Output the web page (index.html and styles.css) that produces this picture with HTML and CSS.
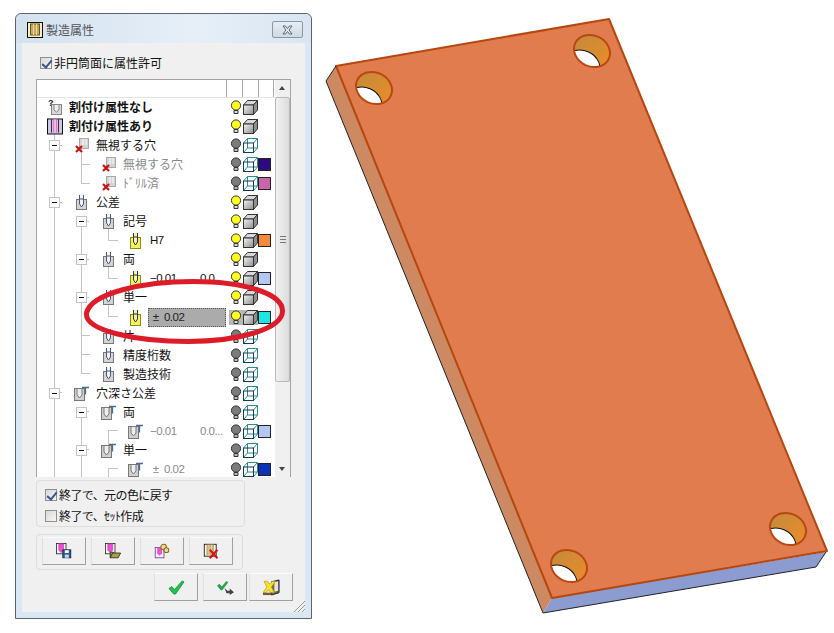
FILE: index.html
```html
<!DOCTYPE html>
<html lang="ja">
<head>
  <meta charset="UTF-8">
  <title>製造属性</title>
  <link rel="stylesheet" href="styles.css">
</head>
<body>

  <!-- shared icons -->
  <svg class="defs" width="0" height="0">
    <defs>
      <linearGradient id="cubeFace" x1="0" y1="0" x2="1" y2="1">
        <stop offset="0" stop-color="#f4f4f4"/>
        <stop offset="1" stop-color="#8c8c8c"/>
      </linearGradient>
      <linearGradient id="holeWall" x1="0" y1="0" x2="1" y2="0.4">
        <stop offset="0" stop-color="#c48a3c"/>
        <stop offset="1" stop-color="#e48c2c"/>
      </linearGradient>
      <symbol id="bulbOn" viewBox="0 0 12 15">
        <circle cx="6" cy="5.5" r="4.6" fill="#ffff1e" stroke="#333"/>
        <path d="M4 10.5h4v3h-4z" fill="#ddd" stroke="#333"/>
      </symbol>
      <symbol id="bulbOff" viewBox="0 0 12 15">
        <circle cx="6" cy="5.5" r="4.6" fill="#7c7c7c" stroke="#333"/>
        <path d="M4 10.5h4v3h-4z" fill="#bbb" stroke="#333"/>
      </symbol>
      <symbol id="cubeSolid" viewBox="0 0 15 15">
        <path d="M.5 5 4.500.5h10L10.500 5z" fill="#d8d8d8" stroke="#333"/>
        <path d="M10.500 5 14.500.5v9.500l-4 4.500z" fill="#8f8f8f" stroke="#333"/>
        <rect x=".5" y="5" width="10" height="9.5" fill="url(#cubeFace)" stroke="#333"/>
      </symbol>
      <symbol id="cubeWire" viewBox="0 0 15 15">
        <path d="M4.500.5h10V10h-10zM4.500 10 .5 14.500M14.500 10l-4 4.500M14.500.5l-4 4.500M4.500.5.5 5" fill="none" stroke="#2a8a94"/>
        <rect x=".5" y="5" width="10" height="9.5" fill="none" stroke="#123c58"/>
      </symbol>
      <symbol id="pin" viewBox="0 0 14 17">
        <rect x="1.500" y="5.500" width="10" height="10" fill="#d4d4d4" stroke="#777"/>
        <path d="M4.500 1v9l2 3 2-3V1" fill="#f2f2f2" stroke="#4a5a78"/>
        <path d="M4.500 5h4" stroke="#4a5a78"/>
      </symbol>
      <symbol id="pinYellow" viewBox="0 0 14 17">
        <rect x="1.500" y="5.500" width="10" height="11" fill="#f2f25a" stroke="#8a8a20"/>
        <path d="M4.500 1v9l2 3 2-3V1" fill="#f6f6a0" stroke="#334"/>
        <path d="M4.500 5h4" stroke="#334"/>
      </symbol>
      <symbol id="pinMissing" viewBox="0 0 14 17">
        <rect x="3.500" y="5.500" width="10" height="10" fill="#d8d8d8" stroke="#888"/>
        <path d="M6 6v5l2.500 2 2.500-2V6" fill="#eee" stroke="#888"/>
        <text x="0" y="7" class="ico-mark">?</text>
      </symbol>
      <symbol id="stripes" viewBox="0 0 16 16">
        <rect x=".5" y=".5" width="15" height="15" fill="#c9c6ee" stroke="#111"/>
        <path d="M4.500 1v13M11.500 1v13" stroke="#333"/>
        <rect x="6" y="1" width="4" height="13" fill="#f070c0"/>
        <path d="M8 1v13" stroke="#fff"/>
      </symbol>
      <symbol id="pinCross" viewBox="0 0 14 17">
        <rect x="4.500" y="1.500" width="9" height="10" fill="#d4d4d4" stroke="#aaa"/>
        <path d="M8 2v6M11 2v6" stroke="#fff"/>
        <path d="M1 9l6 6M7 9l-6 6" stroke="#c81414" stroke-width="2.2"/>
      </symbol>
      <symbol id="depth" viewBox="0 0 16 17">
        <rect x=".5" y="3.500" width="10" height="12" fill="#cfcfcf" stroke="#777"/>
        <path d="M3 4v6l2.500 3L8 10V4" fill="#eee" stroke="#777"/>
        <path d="M8 2.500h7M11.500 2.500v7" stroke="#4a6a98" stroke-width="1.300"/>
      </symbol>
      <symbol id="pinkDoc" viewBox="0 0 20 20">
        <rect x=".5" y=".5" width="12" height="13" fill="#f6f6f6" stroke="#222"/>
        <path d="M3.500 1h6v8l-3 3-3-3z" fill="#f050d0" stroke="#a020a0" stroke-width=".6"/>
      </symbol>
      <clipPath id="holeClip">
        <ellipse rx="18.500" ry="15.500" transform="rotate(25)"/>
      </clipPath>
      <g id="hole">
        <ellipse rx="18.500" ry="15.500" transform="rotate(25)" fill="url(#holeWall)"/>
        <g clip-path="url(#holeClip)">
          <ellipse cx="-10" cy="15" rx="18.500" ry="15.500" transform="rotate(25 -10 15)" fill="#fff" stroke="#111"/>
        </g>
        <ellipse rx="18.500" ry="15.500" transform="rotate(25)" fill="none" stroke="#b8480f" stroke-width="2"/>
      </g>
    </defs>
  </svg>

  <div class="window">
    <div class="titlebar">
      <svg class="title-icon" width="16" height="16" viewBox="0 0 16 16">
        <rect x=".5" y=".5" width="15" height="15" fill="#f4efc8" stroke="#111"/>
        <rect x="3.500" y="2" width="9" height="11" fill="#c8a860" stroke="#6a5420"/>
        <path d="M6.500 2v11M9.500 2v11" stroke="#eddca0"/>
      </svg>
      <span class="title-text">製造属性</span>
      <button class="close-btn">
        <svg width="13" height="10" viewBox="0 0 13 10">
          <path d="M2 1h2.500l2 2.500L8.500 1H11L8 5l3 4H8.500l-2-2.500L4.500 9H2l3-4z" fill="#e8eef4" stroke="#5a6570"/>
        </svg>
      </button>
    </div>

    <div class="panel">
      <label class="check top-check"><span class="box on"></span>非円筒面に属性許可</label>

      <div class="tree">
        <div class="tree-head">
          <span class="head-main"></span><span class="head-col"></span><span class="head-col"></span><span class="head-col"></span>
        </div>
        <div class="tree-main">
          <div class="tree-body">
            <svg class="guides" width="238" height="380">
              <path d="M54.500 36V380M81.500 46V85M81.500 123V275M81.500 314V380M108.500 123V142M108.500 161V180M108.500 199V218M108.500 332V351M108.500 370V380" fill="none" stroke="#c4c4c4"/>
              <path d="M54 47h8M54 104h8M54 294h8M81 66h9M81 85h9M81 123h8M81 161h8M81 199h8M81 237h9M81 256h9M81 275h9M81 313h8M81 351h8M108 142h10M108 180h10M108 218h10M108 332h10M108 370h10" fill="none" stroke="#c4c4c4" transform="translate(0 .5)"/>
            </svg>

            <div class="row lv0"><svg class="ico"><use href="#pinMissing"/></svg><span class="label strong">割付け属性なし</span><span class="state"><svg class="bulb"><use href="#bulbOn"/></svg><svg class="cube"><use href="#cubeSolid"/></svg></span></div>
            <div class="row lv0"><svg class="ico"><use href="#stripes"/></svg><span class="label strong">割付け属性あり</span><span class="state"><svg class="bulb"><use href="#bulbOn"/></svg><svg class="cube"><use href="#cubeSolid"/></svg></span></div>
            <div class="row lv1"><span class="exp"></span><svg class="ico"><use href="#pinCross"/></svg><span class="label">無視する穴</span><span class="state"><svg class="bulb"><use href="#bulbOff"/></svg><svg class="cube"><use href="#cubeWire"/></svg></span></div>
            <div class="row lv2"><svg class="ico"><use href="#pinCross"/></svg><span class="label dim">無視する穴</span><span class="state"><svg class="bulb"><use href="#bulbOff"/></svg><svg class="cube"><use href="#cubeWire"/></svg><span class="swatch navy"></span></span></div>
            <div class="row lv2"><svg class="ico"><use href="#pinCross"/></svg><span class="label dim">ﾄﾞﾘﾙ済</span><span class="state"><svg class="bulb"><use href="#bulbOff"/></svg><svg class="cube"><use href="#cubeWire"/></svg><span class="swatch mauve"></span></span></div>
            <div class="row lv1"><span class="exp"></span><svg class="ico"><use href="#pin"/></svg><span class="label">公差</span><span class="state"><svg class="bulb"><use href="#bulbOn"/></svg><svg class="cube"><use href="#cubeSolid"/></svg></span></div>
            <div class="row lv2"><span class="exp"></span><svg class="ico"><use href="#pin"/></svg><span class="label">記号</span><span class="state"><svg class="bulb"><use href="#bulbOn"/></svg><svg class="cube"><use href="#cubeSolid"/></svg></span></div>
            <div class="row lv3"><svg class="ico"><use href="#pinYellow"/></svg><span class="label num">H7</span><span class="state"><svg class="bulb"><use href="#bulbOn"/></svg><svg class="cube"><use href="#cubeSolid"/></svg><span class="swatch orange"></span></span></div>
            <div class="row lv2"><span class="exp"></span><svg class="ico"><use href="#pin"/></svg><span class="label">両</span><span class="state"><svg class="bulb"><use href="#bulbOn"/></svg><svg class="cube"><use href="#cubeSolid"/></svg></span></div>
            <div class="row lv3"><svg class="ico"><use href="#pinYellow"/></svg><span class="label num"><span class="val">−0.01</span>0.0</span><span class="state"><svg class="bulb"><use href="#bulbOn"/></svg><svg class="cube"><use href="#cubeSolid"/></svg><span class="swatch sky"></span></span></div>
            <div class="row lv2"><span class="exp"></span><svg class="ico"><use href="#pin"/></svg><span class="label">単一</span><span class="state"><svg class="bulb"><use href="#bulbOn"/></svg><svg class="cube"><use href="#cubeSolid"/></svg></span></div>
            <div class="row lv3 sel"><svg class="ico"><use href="#pinYellow"/></svg><span class="label num"> ±  0.02</span><span class="state"><svg class="bulb"><use href="#bulbOn"/></svg><svg class="cube"><use href="#cubeSolid"/></svg><span class="swatch cyan"></span></span></div>
            <div class="row lv2"><svg class="ico"><use href="#pin"/></svg><span class="label">片</span><span class="state"><svg class="bulb"><use href="#bulbOff"/></svg><svg class="cube"><use href="#cubeWire"/></svg></span></div>
            <div class="row lv2"><svg class="ico"><use href="#pin"/></svg><span class="label">精度桁数</span><span class="state"><svg class="bulb"><use href="#bulbOff"/></svg><svg class="cube"><use href="#cubeWire"/></svg></span></div>
            <div class="row lv2"><svg class="ico"><use href="#pin"/></svg><span class="label">製造技術</span><span class="state"><svg class="bulb"><use href="#bulbOff"/></svg><svg class="cube"><use href="#cubeWire"/></svg></span></div>
            <div class="row lv1"><span class="exp"></span><svg class="ico"><use href="#depth"/></svg><span class="label">穴深さ公差</span><span class="state"><svg class="bulb"><use href="#bulbOff"/></svg><svg class="cube"><use href="#cubeWire"/></svg></span></div>
            <div class="row lv2"><span class="exp"></span><svg class="ico"><use href="#depth"/></svg><span class="label">両</span><span class="state"><svg class="bulb"><use href="#bulbOff"/></svg><svg class="cube"><use href="#cubeWire"/></svg></span></div>
            <div class="row lv3"><svg class="ico"><use href="#depth"/></svg><span class="label num dim"><span class="val">−0.01</span>0.0...</span><span class="state"><svg class="bulb"><use href="#bulbOff"/></svg><svg class="cube"><use href="#cubeWire"/></svg><span class="swatch sky"></span></span></div>
            <div class="row lv2"><span class="exp"></span><svg class="ico"><use href="#depth"/></svg><span class="label">単一</span><span class="state"><svg class="bulb"><use href="#bulbOff"/></svg><svg class="cube"><use href="#cubeWire"/></svg></span></div>
            <div class="row lv3"><svg class="ico"><use href="#depth"/></svg><span class="label num dim"> ±  0.02</span><span class="state"><svg class="bulb"><use href="#bulbOff"/></svg><svg class="cube"><use href="#cubeWire"/></svg><span class="swatch blue"></span></span></div>
          </div>

          <div class="scrollbar">
            <span class="arrow up"></span>
            <div class="thumb"><span class="grip"></span></div>
            <span class="arrow down"></span>
          </div>
        </div>
      </div>

      <div class="group group-checks">
        <label class="check tight"><span class="box on"></span>終了で、元の色に戻す</label>
        <label class="check tight"><span class="box"></span>終了で、ｾｯﾄ作成</label>
      </div>

      <div class="group group-tools">
        <button class="btn">
          <svg width="16" height="16" viewBox="0 0 20 20"><use href="#pinkDoc" width="20" height="20"/><rect x="8.500" y="8.500" width="10" height="10" fill="#2a5a98" stroke="#102040"/><rect x="11" y="9" width="5" height="3.500" fill="#fff"/><rect x="11" y="14.500" width="5" height="4" fill="#c8d4e4"/></svg>
        </button>
        <button class="btn">
          <svg width="16" height="16" viewBox="0 0 20 20"><use href="#pinkDoc" width="20" height="20"/><path d="M6.500 18.500l3-6h10l-3 6zM6.500 18.500v-7h4l1 1" fill="#a8a040" stroke="#222"/></svg>
        </button>
        <button class="btn">
          <svg width="16" height="16" viewBox="0 0 20 20"><rect x="1.500" y="5.500" width="11" height="13" fill="#f6f6f6" stroke="#7a2a9a"/><path d="M4 6h6v7l-3 3-3-3z" fill="#f050d0"/><circle cx="12" cy="5" r="3.500" fill="#e8d8a0" stroke="#8a6a10" stroke-width="1.300"/><circle cx="15.500" cy="9" r="3" fill="#e8d8a0" stroke="#8a6a10" stroke-width="1.300"/></svg>
        </button>
        <button class="btn">
          <svg width="17" height="17" viewBox="0 0 20 20"><rect x="1.500" y="1.500" width="14" height="14" fill="#f6f6f6" stroke="#111"/><rect x="4" y="2" width="9" height="13" fill="#c8b078"/><path d="M7 2v13M10 2v13" stroke="#ecdcae"/><path d="M8 8l9 10M17 8 8 18" stroke="#d01818" stroke-width="2.600"/></svg>
        </button>
      </div>

      <div class="actions">
        <button class="btn">
          <svg width="17" height="15" viewBox="0 0 18 16"><path d="M1 9l3-2 3 3 8-9 2 1-9 13h-2z" fill="#22c050" stroke="#128a38" stroke-width=".8"/></svg>
        </button>
        <button class="btn">
          <svg width="17" height="15" viewBox="0 0 18 16"><path d="M0 6l2.500-2 2.500 3 5-6 2 1.500-6.500 8.500h-1.500z" fill="#2aa050"/><path d="M8 8.500l3 3h2.500V9l4.500 4-4.500 3v-2H10z" fill="#444"/></svg>
        </button>
        <button class="btn">
          <svg width="17" height="17" viewBox="0 0 18 17"><path d="M9 2.500l8-2V14l-8 2.500z" fill="#6a6a48" stroke="#1a1a50"/><path d="M12 3l4-1v10l-4 1z" fill="#e8e8c8"/><path d="M1 2h4l2 3 3-3h3L9 8l3 6H8L6 11l-3 3H0l4-6z" fill="#f6e02c" stroke="#a89018" stroke-width=".6"/><path d="M0 14h9v2.500H0z" fill="#7a5a34"/></svg>
        </button>
      </div>

      <svg class="resize-grip" width="12" height="12" viewBox="0 0 12 12">
        <path d="M12 1 1 12M12 5l-7 7M12 9l-3 3" stroke="#9a9a9a"/>
      </svg>
    </div>

    <svg class="marker" width="210" height="72" viewBox="0 0 210 72">
      <path d="M3.500 36C8 16 60 4.500 110 4.500c50 0 89.500 11.500 89.500 29.500 0 18-44.500 30.500-94.500 30.500C55 64.500 1 54 3.500 36z" fill="none" stroke="#dc1c28" stroke-width="5"/>
    </svg>
  </div>

  <svg class="part" width="514" height="633" viewBox="320 0 514 633">
    <polygon points="336,66 326,81 543,613 552,598" fill="#cd8a62"/>
    <polygon points="552,598 543,613 816,567 826,552" fill="#8c9bd0"/>
    <polygon points="336,66 609,19 827,551 552,598" fill="#e07c4e" stroke="#b5470f" stroke-width="2" stroke-linejoin="round"/>
    <polyline points="336,66 326,81 543,613 816,567 826,552" fill="none" stroke="#222" stroke-width="1"/>
    <use href="#hole" x="374" y="88"/>
    <use href="#hole" x="592" y="51"/>
    <use href="#hole" x="569" y="566"/>
    <use href="#hole" x="788" y="529"/>
  </svg>

</body>
</html>
```
FILE: styles.css
```css
* {
  box-sizing: border-box;
}

html, body {
  margin: 0;
  height: 100%;
}

body {
  display: flex;
  align-items: flex-start;
  padding: 13px 0 0 15px;
  background: #fff;
  font-family: "Noto Sans CJK JP", "Liberation Sans", sans-serif;
  font-size: 12px;
  color: #111;
  overflow: hidden;
}

.defs {
  position: absolute;
}

.ico-mark {
  font-family: "Liberation Sans", sans-serif;
  font-size: 9px;
  font-weight: 700;
  fill: #222;
}

/* window */
.window {
  position: relative;
  flex: none;
  display: flex;
  flex-direction: column;
  width: 297px;
  height: 606px;
  border: 1px solid #59646e;
  border-radius: 6px 6px 0 0;
  background: #dbe7f3;
}

.titlebar {
  flex: none;
  display: flex;
  align-items: center;
  height: 29px;
  padding: 2px 8px 0 11px;
  background: linear-gradient(90deg, #d3e1ef, #e6eff8 60%, #d9e6f2);
  border-radius: 6px 6px 0 0;
}

.title-icon {
  flex: none;
}

.title-text {
  margin-left: 3px;
  color: #555;
  font-size: 12px;
}

.close-btn {
  display: flex;
  align-items: center;
  justify-content: center;
  width: 31px;
  height: 17px;
  margin-left: auto;
  padding: 0;
  border: 1px solid #8b97a3;
  border-radius: 2px;
  background: linear-gradient(#e6edf4, #cfdae5);
}

.panel {
  position: relative;
  flex: 1;
  margin: 0 6px 6px;
  padding: 13px 13px 0 14px;
  background: #f0f0f0;
}

/* checks */
.check {
  display: flex;
  align-items: center;
  gap: 2px;
  height: 14px;
  line-height: 14px;
  white-space: nowrap;
}

.tight {
  letter-spacing: -.6px;
}

.top-check {
  margin-left: 4px;
}

.box {
  flex: none;
  position: relative;
  width: 12px;
  height: 12px;
  border: 1px solid #8e8f8f;
  background: linear-gradient(135deg, #d8d8d8, #f6f6f6);
}

.box.on::after {
  content: "";
  position: absolute;
  left: 3px;
  top: 0;
  width: 4px;
  height: 8px;
  border: solid #3d5590;
  border-width: 0 2px 2px 0;
  transform: rotate(40deg);
}

/* tree */
.tree {
  width: 255px;
  height: 398px;
  margin-top: 9px;
  display: flex;
  flex-direction: column;
  border: solid #a3a3a3;
  border-width: 1px 1px 0;
  background: #fff;
}

.tree-head {
  flex: none;
  display: flex;
  height: 18px;
  border-bottom: 1px solid #e4e4e4;
}

.head-main {
  width: 189px;
}

.head-col {
  width: 16px;
  border-left: 1px solid #a8a8a8;
}

.head-col:last-child {
  border-right: 1px solid #a8a8a8;
}

.tree-main {
  flex: 1;
  min-height: 0;
  display: flex;
}

.tree-body {
  position: relative;
  isolation: isolate;
  flex: none;
  width: 238px;
  overflow: hidden;
}

.guides {
  position: absolute;
  left: -37px;
  top: 0;
  z-index: -1;
}

.row {
  display: flex;
  align-items: center;
  height: 19.05px;
  white-space: pre;
}

.lv0 { padding-left: 10px; }
.lv1 { padding-left: 37px; }
.lv2 { padding-left: 64px; }
.lv3 { padding-left: 91px; }

.exp {
  flex: none;
  position: relative;
  width: 11px;
  height: 11px;
  margin: 0 14px 0 -25px;
  border: 1px solid #c4c4c4;
  background: #fff;
}

.exp::after {
  content: "";
  position: absolute;
  left: 2px;
  top: 4px;
  width: 5px;
  height: 1px;
  background: #111;
}

.ico {
  flex: none;
  width: 16px;
  height: 17px;
  margin-right: 6px;
}

.label {
  flex: 1;
  min-width: 0;
  height: 19px;
  line-height: 18px;
  margin-left: -2px;
  padding-left: 2px;
}

.strong {
  font-weight: 700;
}

.dim {
  color: #8a8a8a;
}

/* numbers and latin in the list are narrower than the kana */
.num {
  font-family: "Liberation Sans", sans-serif;
  font-size: 11.5px;
  letter-spacing: -.5px;
}

.val {
  display: inline-block;
  width: 50px;
}

.state {
  flex: none;
  display: flex;
  align-items: center;
  width: 46px;
  margin-left: 3px;
  padding-left: 1px;
}

.bulb {
  flex: none;
  width: 12px;
  height: 15px;
  margin-right: 1px;
}

.cube {
  flex: none;
  width: 15px;
  height: 15px;
}

.swatch {
  flex: none;
  width: 13px;
  height: 13px;
  border: 1px solid #222;
}

.navy { background: #2e0a80; }
.mauve { background: #c866a8; }
.orange { background: #f58a3a; }
.sky { background: #b3c6f5; }
.cyan { background: #1de5e5; }
.blue { background: #0a35b8; }

.sel .label {
  background: #ababab;
  outline: 1px dotted #555;
  outline-offset: -1px;
  color: #222;
}

.sel .state {
  background: linear-gradient(90deg, #b8b8b8 29px, transparent 29px);
}

/* scrollbar */
.scrollbar {
  flex: none;
  display: flex;
  flex-direction: column;
  width: 15px;
  background: #f0f0f0;
  margin-top: -18px;
}

.arrow {
  flex: none;
  height: 17px;
  position: relative;
}

.arrow::after {
  content: "";
  position: absolute;
  left: 4px;
  border: 3.5px solid transparent;
}

.arrow.up::after {
  top: 3px;
  border-bottom: 4px solid #444;
}

.arrow.down {
  margin-top: auto;
}

.arrow.down::after {
  top: 7px;
  border-top: 4px solid #444;
}

.thumb {
  flex: none;
  display: flex;
  align-items: center;
  justify-content: center;
  height: 285px;
  border: 1px solid #b8b8b8;
  border-radius: 2px;
  background: linear-gradient(90deg, #f2f2f2, #dcdcdc);
}

.grip {
  width: 6px;
  height: 7px;
  border-top: 1px solid #777;
  border-bottom: 1px solid #777;
  background: linear-gradient(#777, #777) center / 100% 1px no-repeat;
}

/* groups */
.group {
  border: 1px solid #dddddd;
  border-radius: 4px;
}

.group-checks {
  display: flex;
  flex-direction: column;
  gap: 7px;
  width: 209px;
  height: 47px;
  margin-top: 3px;
  padding: 7px 0 0 8px;
}

.group-tools {
  display: flex;
  gap: 5px;
  width: 207px;
  height: 36px;
  margin-top: 7px;
  padding: 2px 0 0 5px;
}

.btn {
  flex: none;
  display: flex;
  align-items: center;
  justify-content: center;
  width: 44px;
  height: 28px;
  padding: 0;
  background: #f0f0f0;
  border: 1px solid;
  border-color: #fbfbfb #a0a0a0 #a0a0a0 #e0e0e0;
}

.actions {
  display: flex;
  gap: 5px;
  margin: 3px 0 0 118px;
}

.actions .btn:last-child {
  margin-left: -3px;
}

.resize-grip {
  position: absolute;
  right: 0;
  bottom: 0;
}

/* red marker drawn over the dialog */
.marker {
  position: absolute;
  left: 67px;
  top: 263px;
}

/* 3D part */
.part {
  flex: none;
  margin: -13px 0 0 8px;
}
```
